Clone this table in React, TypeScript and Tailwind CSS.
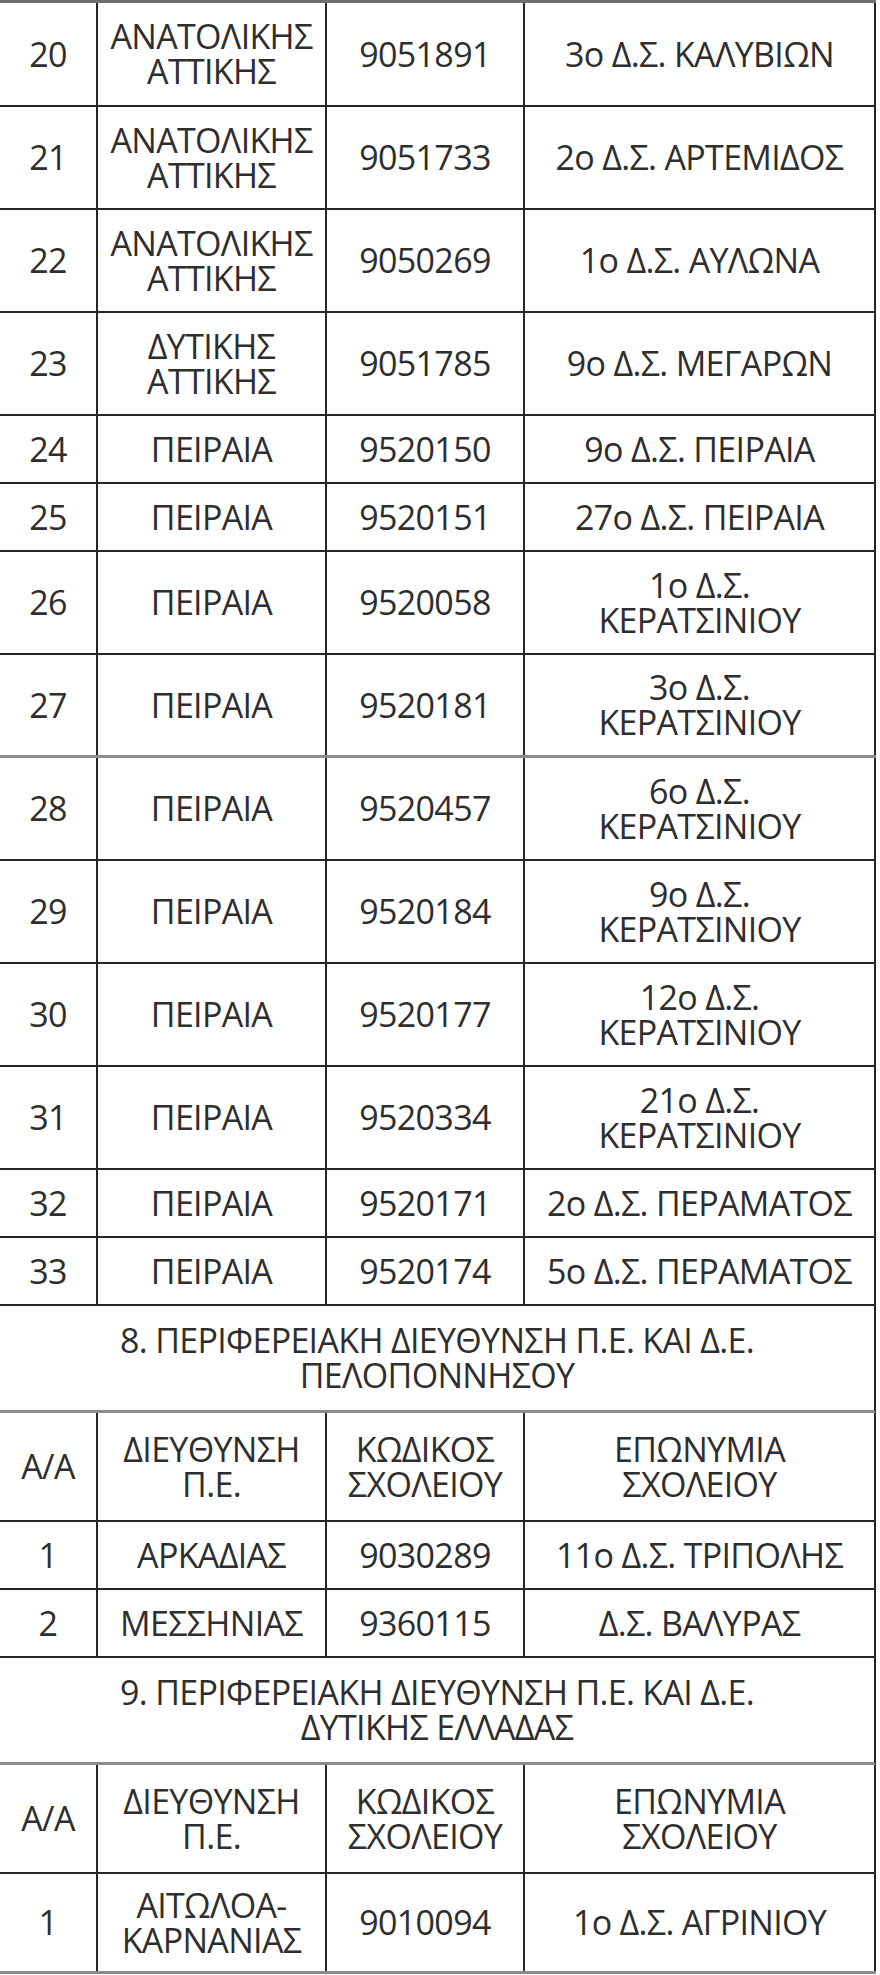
import React from "react";

type Row = { n: string; d: string[]; c: string; s: string[]; h: string; b: string };

const DARK = "border-b-2 border-b-[#262626]";
const GRAY = "border-b-[3px] border-b-[#8c8c8c]";

const rowsA: Row[] = [
  { n: "20", d: ["ΑΝΑΤΟΛΙΚΗΣ", "ΑΤΤΙΚΗΣ"], c: "9051891", s: ["3ο Δ.Σ. ΚΑΛΥΒΙΩΝ"], h: "h-[104px]", b: DARK },
  { n: "21", d: ["ΑΝΑΤΟΛΙΚΗΣ", "ΑΤΤΙΚΗΣ"], c: "9051733", s: ["2ο Δ.Σ. ΑΡΤΕΜΙΔΟΣ"], h: "h-[103px]", b: DARK },
  { n: "22", d: ["ΑΝΑΤΟΛΙΚΗΣ", "ΑΤΤΙΚΗΣ"], c: "9050269", s: ["1ο Δ.Σ. ΑΥΛΩΝΑ"], h: "h-[103px]", b: DARK },
  { n: "23", d: ["ΔΥΤΙΚΗΣ", "ΑΤΤΙΚΗΣ"], c: "9051785", s: ["9ο Δ.Σ. ΜΕΓΑΡΩΝ"], h: "h-[103px]", b: DARK },
  { n: "24", d: ["ΠΕΙΡΑΙΑ"], c: "9520150", s: ["9ο Δ.Σ. ΠΕΙΡΑΙΑ"], h: "h-[68px]", b: DARK },
  { n: "25", d: ["ΠΕΙΡΑΙΑ"], c: "9520151", s: ["27ο Δ.Σ. ΠΕΙΡΑΙΑ"], h: "h-[68px]", b: DARK },
  { n: "26", d: ["ΠΕΙΡΑΙΑ"], c: "9520058", s: ["1ο Δ.Σ.", "ΚΕΡΑΤΣΙΝΙΟΥ"], h: "h-[103px]", b: DARK },
  { n: "27", d: ["ΠΕΙΡΑΙΑ"], c: "9520181", s: ["3ο Δ.Σ.", "ΚΕΡΑΤΣΙΝΙΟΥ"], h: "h-[103px]", b: GRAY },
  { n: "28", d: ["ΠΕΙΡΑΙΑ"], c: "9520457", s: ["6ο Δ.Σ.", "ΚΕΡΑΤΣΙΝΙΟΥ"], h: "h-[103px]", b: DARK },
  { n: "29", d: ["ΠΕΙΡΑΙΑ"], c: "9520184", s: ["9ο Δ.Σ.", "ΚΕΡΑΤΣΙΝΙΟΥ"], h: "h-[103px]", b: DARK },
  { n: "30", d: ["ΠΕΙΡΑΙΑ"], c: "9520177", s: ["12ο Δ.Σ.", "ΚΕΡΑΤΣΙΝΙΟΥ"], h: "h-[103px]", b: DARK },
  { n: "31", d: ["ΠΕΙΡΑΙΑ"], c: "9520334", s: ["21ο Δ.Σ.", "ΚΕΡΑΤΣΙΝΙΟΥ"], h: "h-[103px]", b: DARK },
  { n: "32", d: ["ΠΕΙΡΑΙΑ"], c: "9520171", s: ["2ο Δ.Σ. ΠΕΡΑΜΑΤΟΣ"], h: "h-[68px]", b: DARK },
  { n: "33", d: ["ΠΕΙΡΑΙΑ"], c: "9520174", s: ["5ο Δ.Σ. ΠΕΡΑΜΑΤΟΣ"], h: "h-[68px]", b: DARK },
];

const rowsB: Row[] = [
  { n: "1", d: ["ΑΡΚΑΔΙΑΣ"], c: "9030289", s: ["11ο Δ.Σ. ΤΡΙΠΟΛΗΣ"], h: "h-[68px]", b: DARK },
  { n: "2", d: ["ΜΕΣΣΗΝΙΑΣ"], c: "9360115", s: ["Δ.Σ. ΒΑΛΥΡΑΣ"], h: "h-[68px]", b: DARK },
];

const rowsC: Row[] = [
  { n: "1", d: ["ΑΙΤΩΛΟΑ-", "ΚΑΡΝΑΝΙΑΣ"], c: "9010094", s: ["1ο Δ.Σ. ΑΓΡΙΝΙΟΥ"], h: "h-[100px]", b: GRAY },
];

function Cell({ lines }: { lines: string[] }) {
  return (
    <div className="flex flex-col items-center justify-center border-r-2 border-r-[#262626] text-center">
      {lines.map((l, i) => (
        <span key={i} className="block whitespace-nowrap">
          {l}
        </span>
      ))}
    </div>
  );
}

function DataRow({ r }: { r: Row }) {
  return (
    <div className={`grid grid-cols-[98px_229px_198px_351px] ${r.h} ${r.b}`}>
      <Cell lines={[r.n]} />
      <Cell lines={r.d} />
      <Cell lines={[r.c]} />
      <Cell lines={r.s} />
    </div>
  );
}

function HeaderRow() {
  return (
    <div className={`grid grid-cols-[98px_229px_198px_351px] h-[109px] ${DARK}`}>
      <Cell lines={["Α/Α"]} />
      <Cell lines={["ΔΙΕΥΘΥΝΣΗ", "Π.Ε."]} />
      <Cell lines={["ΚΩΔΙΚΟΣ", "ΣΧΟΛΕΙΟΥ"]} />
      <Cell lines={["ΕΠΩΝΥΜΙΑ", "ΣΧΟΛΕΙΟΥ"]} />
    </div>
  );
}

function SectionRow({ lines }: { lines: string[] }) {
  return (
    <div className={`flex h-[107px] flex-col items-center justify-center border-r-2 border-r-[#262626] text-center ${GRAY}`}>
      {lines.map((l, i) => (
        <span key={i} className="block whitespace-nowrap">
          {l}
        </span>
      ))}
    </div>
  );
}

export default function App() {
  return (
    <div className="min-h-[1975px] w-[880px] bg-white">
      <div
        className="w-[876px] border-t-[3px] border-t-[#6e6e6e] text-[34px] leading-[35px] tracking-[-0.02em] text-[#2e2e2e]"
        style={{ fontFamily: '"Open Sans", "Noto Sans", sans-serif' }}
      >
        {rowsA.map((r) => (
          <DataRow key={"a" + r.n} r={r} />
        ))}
        <SectionRow lines={["8. ΠΕΡΙΦΕΡΕΙΑΚΗ ΔΙΕΥΘΥΝΣΗ Π.Ε. ΚΑΙ Δ.Ε.", "ΠΕΛΟΠΟΝΝΗΣΟΥ"]} />
        <HeaderRow />
        {rowsB.map((r) => (
          <DataRow key={"b" + r.n} r={r} />
        ))}
        <SectionRow lines={["9. ΠΕΡΙΦΕΡΕΙΑΚΗ ΔΙΕΥΘΥΝΣΗ Π.Ε. ΚΑΙ Δ.Ε.", "ΔΥΤΙΚΗΣ ΕΛΛΑΔΑΣ"]} />
        <HeaderRow />
        {rowsC.map((r) => (
          <DataRow key={"c" + r.n} r={r} />
        ))}
      </div>
    </div>
  );
}
